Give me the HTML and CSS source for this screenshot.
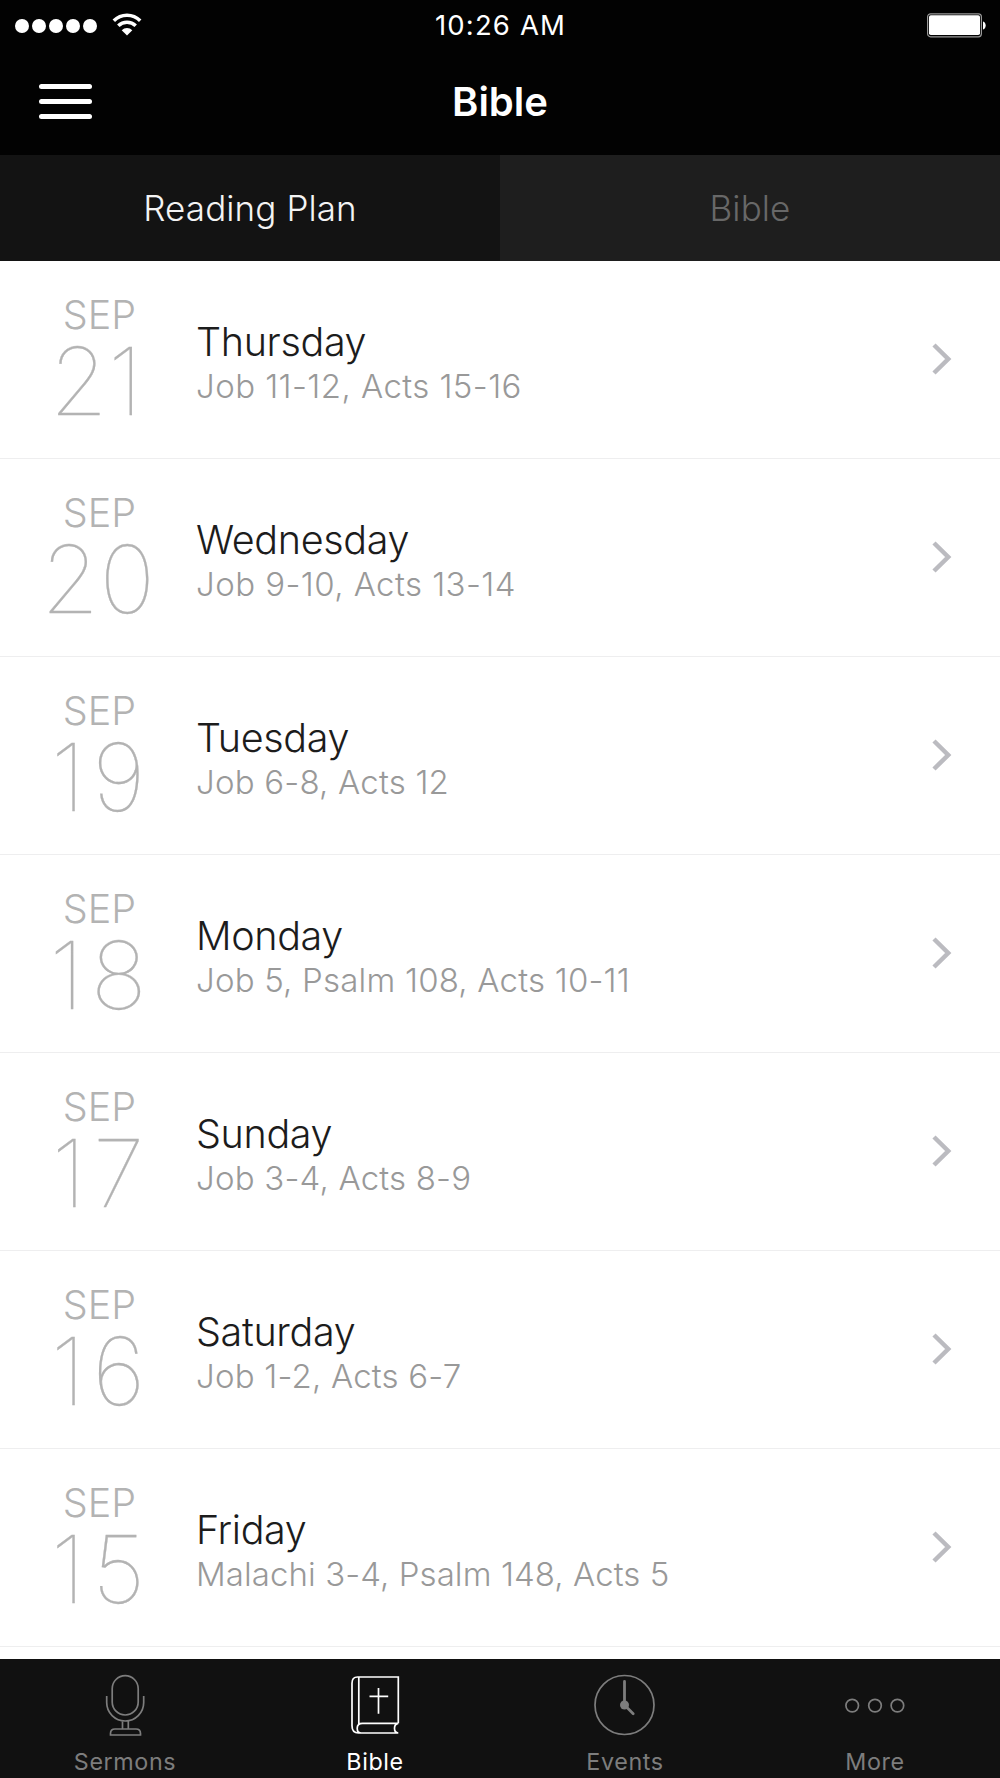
FILE: index.html
```html
<!DOCTYPE html>
<html lang="en">
<head>
<meta charset="utf-8">
<title>Bible</title>
<link rel="stylesheet" href="styles.css">
</head>
<body>
<div class="app">
  <header class="header">
    <div class="status">
      <div class="status-left">
        <span class="signal"><i></i><i></i><i></i><i></i><i></i></span>
        <svg class="wifi" width="30" height="23" viewBox="0 0 30 23" fill="none" stroke="#fff" stroke-width="3.5">
          <path d="M1.8 7.7a18.6 18.6 0 0 1 26.4 0"/>
          <path d="M6.3 12.7a12.4 12.4 0 0 1 17.4 0"/>
          <path d="M9.7 17.3a7.5 7.5 0 0 1 10.6 0L15 22.4z" fill="#fff" stroke="none"/>
        </svg>
      </div>
      <span class="time">10:26 AM</span>
      <div class="status-right">
        <svg width="59" height="25" viewBox="0 0 59 25">
          <rect x=".6" y=".8" width="53.8" height="23" rx="3" fill="none" stroke="#999" stroke-width="1.2"/>
          <rect x="2" y="2.2" width="51" height="19.8" rx="1.8" fill="#fff"/>
          <path d="M56 8.5C59.6 9.5 59.6 15.5 56 16.5z" fill="#fff"/>
        </svg>
      </div>
    </div>
    <div class="nav">
      <button class="menu" aria-label="Menu"><i></i><i></i><i></i></button>
      <h1 class="title">Bible</h1>
      <span></span>
    </div>
  </header>
  <nav class="tabs">
    <span class="tab active">Reading Plan</span>
    <span class="tab">Bible</span>
  </nav>
  <ul class="plan">
    <li class="row">
      <div class="date"><span class="month">SEP</span><span class="num first">21</span></div>
      <div class="info"><span class="day">Thursday</span><span class="passage loose">Job 11-12, Acts 15-16</span></div>
      <svg class="chevron" width="20" height="32" viewBox="0 0 20 32"><path d="M2 2l14.2 14L2 30"/></svg>
    </li>
    <li class="row">
      <div class="date"><span class="month">SEP</span><span class="num">20</span></div>
      <div class="info"><span class="day">Wednesday</span><span class="passage loose">Job 9-10, Acts 13-14</span></div>
      <svg class="chevron" width="20" height="32" viewBox="0 0 20 32"><path d="M2 2l14.2 14L2 30"/></svg>
    </li>
    <li class="row">
      <div class="date"><span class="month">SEP</span><span class="num teen">19</span></div>
      <div class="info"><span class="day">Tuesday</span><span class="passage">Job 6-8, Acts 12</span></div>
      <svg class="chevron" width="20" height="32" viewBox="0 0 20 32"><path d="M2 2l14.2 14L2 30"/></svg>
    </li>
    <li class="row">
      <div class="date"><span class="month">SEP</span><span class="num teen">18</span></div>
      <div class="info"><span class="day">Monday</span><span class="passage">Job 5, Psalm 108, Acts 10-11</span></div>
      <svg class="chevron" width="20" height="32" viewBox="0 0 20 32"><path d="M2 2l14.2 14L2 30"/></svg>
    </li>
    <li class="row">
      <div class="date"><span class="month">SEP</span><span class="num teen">17</span></div>
      <div class="info"><span class="day">Sunday</span><span class="passage">Job 3-4, Acts 8-9</span></div>
      <svg class="chevron" width="20" height="32" viewBox="0 0 20 32"><path d="M2 2l14.2 14L2 30"/></svg>
    </li>
    <li class="row">
      <div class="date"><span class="month">SEP</span><span class="num teen">16</span></div>
      <div class="info"><span class="day">Saturday</span><span class="passage">Job 1-2, Acts 6-7</span></div>
      <svg class="chevron" width="20" height="32" viewBox="0 0 20 32"><path d="M2 2l14.2 14L2 30"/></svg>
    </li>
    <li class="row">
      <div class="date"><span class="month">SEP</span><span class="num teen">15</span></div>
      <div class="info"><span class="day">Friday</span><span class="passage tight">Malachi 3-4, Psalm 148, Acts 5</span></div>
      <svg class="chevron" width="20" height="32" viewBox="0 0 20 32"><path d="M2 2l14.2 14L2 30"/></svg>
    </li>
  </ul>
  <footer class="tabbar">
    <div class="item">
      <svg width="64" height="64" viewBox="0 0 64 64">
        <rect x="19.2" y="2.7" width="26" height="39.3" rx="13"/>
        <path d="M13.7 23v6.5a18.5 18.5 0 0 0 37 0v-6.5M29.5 48.2v8.3M35.3 48.2v8.3M17.5 62v-1.5q0-4.5 4.5-4.5h21q4.5 0 4.5 4.5v1.5z"/>
      </svg>
      <span>Sermons</span>
    </div>
    <div class="item active">
      <svg width="64" height="64" viewBox="0 0 64 64">
        <path d="M55.3 50.3V4H14.5Q9 4 9 10.3V52.8Q9 60 15.5 60H55.3M15.8 4V51.3M55.3 50.3H19.5Q14.2 50.3 14.2 55.3Q14.2 60 18 60M55.3 50.3Q51.5 50.8 51.5 55.3T55.3 60M35.5 15V40.8M26.5 23.3H45.2"/>
      </svg>
      <span>Bible</span>
    </div>
    <div class="item">
      <svg width="64" height="64" viewBox="0 0 64 64">
        <circle cx="31.5" cy="32" r="29.5"/>
        <path d="M31.5 8.5V32l8.7 8.7" stroke-width="2.8" stroke-linecap="round"/>
        <circle class="solid" cx="31.5" cy="32" r="4.5"/>
      </svg>
      <span>Events</span>
    </div>
    <div class="item">
      <svg width="64" height="64" viewBox="0 0 64 64">
        <circle cx="9.2" cy="32.6" r="6.3"/>
        <circle cx="32" cy="32.6" r="6.3"/>
        <circle cx="54.4" cy="32.6" r="6.3"/>
      </svg>
      <span>More</span>
    </div>
  </footer>
</div>
</body>
</html>
```
FILE: styles.css
```css
* { box-sizing: border-box; }

body {
  margin: 0;
  font-family: Inter, "Liberation Sans", sans-serif;
  background: #fff;
}

.app {
  width: 1000px;
  height: 1778px;
  display: flex;
  flex-direction: column;
  overflow: hidden;
}

/* Header */
.header {
  height: 155px;
  flex: none;
  background: #020202;
  color: #fff;
}

.status {
  height: 51px;
  padding: 0 14px 0 15px;
  display: grid;
  grid-template-columns: 1fr auto 1fr;
  align-items: center;
}

.status-left { display: flex; align-items: center; gap: 15px; }
.signal { display: flex; gap: 3.3px; }
.signal i { width: 13.7px; height: 14px; border-radius: 50%; background: #fff; }
.wifi { margin-top: -3px; }
.time { font-size: 27.5px; line-height: 51px; letter-spacing: 1.15px; }
.status-right { display: flex; justify-content: flex-end; align-items: center; }

.nav {
  height: 104px;
  padding: 0 39px;
  display: grid;
  grid-template-columns: 1fr auto 1fr;
  align-items: start;
}

.menu {
  width: 53px;
  height: 35px;
  margin: 33px 0 0;
  padding: 0;
  border: 0;
  background: none;
  display: flex;
  flex-direction: column;
  justify-content: space-between;
}
.menu i { height: 5px; border-radius: 3px; background: #fff; }

.title {
  margin: 0;
  font-size: 40px;
  line-height: 102px;
  font-weight: 600;
}

.tabs {
  height: 106px;
  flex: none;
  display: grid;
  grid-template-columns: 1fr 1fr;
}
.tab {
  background: #1e1e1e;
  color: #686868;
  text-align: center;
  font-size: 35px;
  line-height: 106px;
  font-weight: 300;
  letter-spacing: .1px;
}
.tab.active { background: #131313; color: #f4f4f4; }

/* Reading plan */
.plan {
  height: 1398px;
  flex: none;
  margin: 0;
  padding: 0;
  list-style: none;
}
.row {
  height: 198px;
  display: flex;
  border-bottom: 1px solid #eeeeef;
}
.date {
  width: 196px;
  flex: none;
  padding-top: 34px;
  text-align: center;
  color: #b3b3b3;
}
.month {
  display: block;
  padding-left: 3px;
  font-size: 39.5px;
  line-height: 40px;
  font-weight: 300;
}
.num {
  display: block;
  margin-top: 6px;
  font-size: 94px;
  line-height: 80px;
  font-weight: 100;
  -webkit-text-stroke: .3px #b3b3b3;
}
.num.first { padding-right: 4px; }
.num.teen { padding-left: 7px; letter-spacing: 7px; }
.info { flex: 1; padding-top: 58px; }
.day {
  display: block;
  color: #1c1c1c;
  font-size: 39.5px;
  line-height: 46px;
  font-weight: 300;
  letter-spacing: -.35px;
}
.passage {
  display: block;
  margin-top: 1px;
  color: #999;
  font-size: 33px;
  line-height: 40px;
  font-weight: 300;
  letter-spacing: .2px;
}
.passage.loose { letter-spacing: .43px; }
.passage.tight { letter-spacing: .08px; }
.chevron {
  margin: 82px 48px 0 0;
  fill: none;
  stroke: #bbbbc0;
  stroke-width: 4.5;
}

/* Bottom bar */
.tabbar {
  flex: 1;
  background: #111;
  display: grid;
  grid-template-columns: repeat(4, 1fr);
}
.item {
  padding-top: 14px;
  display: flex;
  flex-direction: column;
  align-items: center;
  color: #7d7d7d;
}
.item svg { fill: none; stroke: currentColor; stroke-width: 1.7; }
.item .solid { fill: currentColor; stroke: none; }
.item span {
  margin-top: 10px;
  font-size: 23.3px;
  line-height: 30px;
  letter-spacing: .6px;
}
.item.active { color: #fff; }
```
